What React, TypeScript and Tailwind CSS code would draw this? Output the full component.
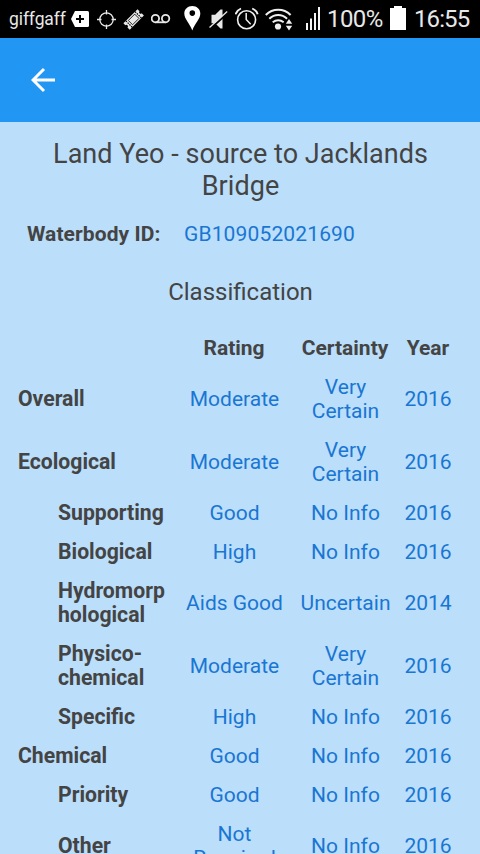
type Row = {
  label: string[];
  sub?: boolean;
  rating: string[];
  certainty: string[];
  year: string;
};

const rows: Row[] = [
  { label: ["Overall"], rating: ["Moderate"], certainty: ["Very", "Certain"], year: "2016" },
  { label: ["Ecological"], rating: ["Moderate"], certainty: ["Very", "Certain"], year: "2016" },
  { label: ["Supporting"], sub: true, rating: ["Good"], certainty: ["No Info"], year: "2016" },
  { label: ["Biological"], sub: true, rating: ["High"], certainty: ["No Info"], year: "2016" },
  { label: ["Hydromorp", "hological"], sub: true, rating: ["Aids Good"], certainty: ["Uncertain"], year: "2014" },
  { label: ["Physico-", "chemical"], sub: true, rating: ["Moderate"], certainty: ["Very", "Certain"], year: "2016" },
  { label: ["Specific"], sub: true, rating: ["High"], certainty: ["No Info"], year: "2016" },
  { label: ["Chemical"], rating: ["Good"], certainty: ["No Info"], year: "2016" },
  { label: ["Priority"], sub: true, rating: ["Good"], certainty: ["No Info"], year: "2016" },
  { label: ["Other"], sub: true, rating: ["Not", "Required"], certainty: ["No Info"], year: "2016" },
];

function Lines({ text }: { text: string[] }) {
  return (
    <>
      {text.map((line) => (
        <span key={line} className="block whitespace-nowrap">
          {line}
        </span>
      ))}
    </>
  );
}

function StatusBar() {
  return (
    <header className="flex h-[38px] shrink-0 items-center bg-black pl-[9px] whitespace-nowrap text-[#e8e8e8]">
      <span className="w-[62px] text-[17.5px] leading-[38px] tracking-[-0.1px]">giffgaff</span>
      {/* Tag with a plus */}
      <svg className="h-[38px] w-[26px] shrink-0" viewBox="71 0 26 38" fill="none">
        <path d="M75 11h12.500q1.500 0 1.500 1.500v13q0 1.500-1.500 1.500H75l-4-8z" fill="#fff" />
        <path d="M80 15v8M76 19h8" stroke="#000" strokeWidth="2" />
      </svg>
      {/* Location crosshair */}
      <svg className="h-[38px] w-[26px] shrink-0" viewBox="97 0 26 38" fill="none" stroke="#e8e8e8" strokeWidth="1.300">
        <circle cx="106.500" cy="19.500" r="6.700" />
        <path d="M106.500 10v4.500M106.500 24.500V29M97 19.500h4.500M111.500 19.500h4.500" />
      </svg>
      {/* Ticket */}
      <svg className="h-[38px] w-[28px] shrink-0" viewBox="123 0 28 38" fill="none">
        <g transform="rotate(-45 133.500 19.300)">
          <path d="M123.500 15h20v2.800a1.500 1.500 0 0 0 0 3V24h-20v-3.200a1.500 1.500 0 0 0 0-3z" fill="#e8e8e8" />
          <path d="M127 15v9M140 15v9" stroke="#000" strokeWidth="1.200" strokeDasharray="1.500 1" />
          <path d="M129 16.500h9v6h-9z" stroke="#000" strokeWidth=".8" />
        </g>
      </svg>
      {/* Voicemail */}
      <svg className="h-[38px] w-[33px] shrink-0" viewBox="151 0 33 38" fill="none" stroke="#e8e8e8" strokeWidth="1.800">
        <circle cx="155.400" cy="18.600" r="3.700" />
        <circle cx="165.600" cy="18.600" r="3.700" />
        <path d="M155.400 22.300h10.200" />
      </svg>
      {/* Map pin */}
      <svg className="h-[38px] w-[25px] shrink-0" viewBox="184 0 25 38">
        <path
          fillRule="evenodd"
          d="M192.300 6c-4.600 0-8 3.300-8 7.500 0 5.500 5.300 9.500 8 17 2.700-7.500 8-11.500 8-17 0-4.200-3.400-7.500-8-7.500zm0 4.300a2.800 2.800 0 1 1 0 5.600 2.800 2.800 0 0 1 0-5.600z"
          fill="#fff"
        />
      </svg>
      {/* Muted speaker */}
      <svg className="h-[38px] w-[26px] shrink-0" viewBox="209 0 26 38" fill="none">
        <path d="M211.500 14.800h3.700l5.300-5.300h2v19h-2l-5.300-5.300h-3.700z" fill="#e8e8e8" />
        <path d="M210.500 28.500L228 12.800" stroke="#000" strokeWidth="2" />
        <path d="M209.500 27.500L227.200 11.500" stroke="#e8e8e8" strokeWidth="1.300" />
      </svg>
      {/* Alarm clock */}
      <svg className="h-[38px] w-[30px] shrink-0" viewBox="235 0 30 38" fill="none" stroke="#f0f0f0">
        <circle cx="246.600" cy="19.800" r="9" strokeWidth="1.600" />
        <path d="M246.200 13v6.500l4.500 4.800" strokeWidth="1.500" />
        <path d="M235.500 14.300q1.300-4 5.500-5.800M252.200 8.500q4.200 1.800 5.500 5.800" strokeWidth="1.900" />
      </svg>
      {/* Wi-Fi */}
      <svg className="h-[38px] w-[41px] shrink-0" viewBox="265 0 41 38" fill="none" stroke="#f0f0f0" strokeWidth="2">
        <path d="M265.800 15q5.300-5.200 12.400-5.200T290.600 15" />
        <path d="M269.300 18.800q4-3.700 8.900-3.700t8.900 3.700" />
        <path d="M272.700 22.200q2.600-2 5.500-2t5.500 2" />
        <circle cx="278" cy="26.500" r="3.100" fill="#f0f0f0" stroke="none" />
        <path d="M289 19l3.200 4.800h-6.400zM289 30.500l3.200-4.800h-6.400z" fill="#f0f0f0" stroke="none" />
      </svg>
      {/* Mobile signal */}
      <svg className="h-[38px] w-[21px] shrink-0" viewBox="306 0 21 38" fill="#f5f5f5">
        <path d="M306 23h2v7h-2zM310 18.500h2V30h-2zM314 13h2v17h-2zM318 7h2v23h-2z" />
      </svg>
      <span className="w-[63px] text-[24px] leading-[40px] tracking-[-0.6px]">100%</span>
      <svg className="h-[38px] w-[24px] shrink-0" viewBox="390 0 24 38" fill="#fff">
        <path d="M390 8h4V6h8v2h4v22h-16z" />
      </svg>
      <span className="text-[24px] leading-[40px] tracking-[-0.9px]">16:55</span>
    </header>
  );
}

const grid = "grid grid-cols-[158px_116px_106px_60px] items-center pt-[7px] pb-[8px] pl-[18px]";

export default function App() {
  return (
    <div className="flex h-[854px] w-[480px] flex-col overflow-hidden bg-[#bbdefb] font-['Roboto',sans-serif] text-[21px] leading-[24px] text-[#444]">
      <StatusBar />
      <nav className="flex h-[84px] shrink-0 items-center bg-[#2196f3] pl-[31px]">
        <button aria-label="Back">
          <svg width="26" height="26" viewBox="0 0 26 26" fill="none" stroke="#fff" strokeWidth="3">
            <path d="M24 13H3M13 2L2 13l11 11" />
          </svg>
        </button>
      </nav>
      <main className="flex flex-col pt-4">
        <h1 className="pl-px text-center text-[27px] leading-[32px] tracking-[0.04px]">
          Land Yeo - source to Jacklands
          <br />
          Bridge
        </h1>
        <div className="mt-5 flex pl-[27px]">
          <span className="w-[157px] font-bold tracking-[0.08px]">Waterbody ID:</span>
          <span className="tracking-[0.14px] text-[#1976d2]">GB109052021690</span>
        </div>
        <h2 className="mt-[30px] mb-[21px] pl-px text-center text-[24px] leading-[32px]">Classification</h2>
        <div className={`${grid} text-center font-bold`}>
          <span />
          <span>Rating</span>
          <span>Certainty</span>
          <span>Year</span>
        </div>
        {rows.map((row) => (
          <div key={row.label[0]} className={`${grid} text-center text-[#1976d2]`}>
            <div className={`text-left text-[21.2px] font-bold text-[#444] ${row.sub ? "pl-10" : ""}`}>
              <Lines text={row.label} />
            </div>
            <div className="pl-px">
              <Lines text={row.rating} />
            </div>
            <div className="pl-px">
              <Lines text={row.certainty} />
            </div>
            <div>{row.year}</div>
          </div>
        ))}
      </main>
    </div>
  );
}
